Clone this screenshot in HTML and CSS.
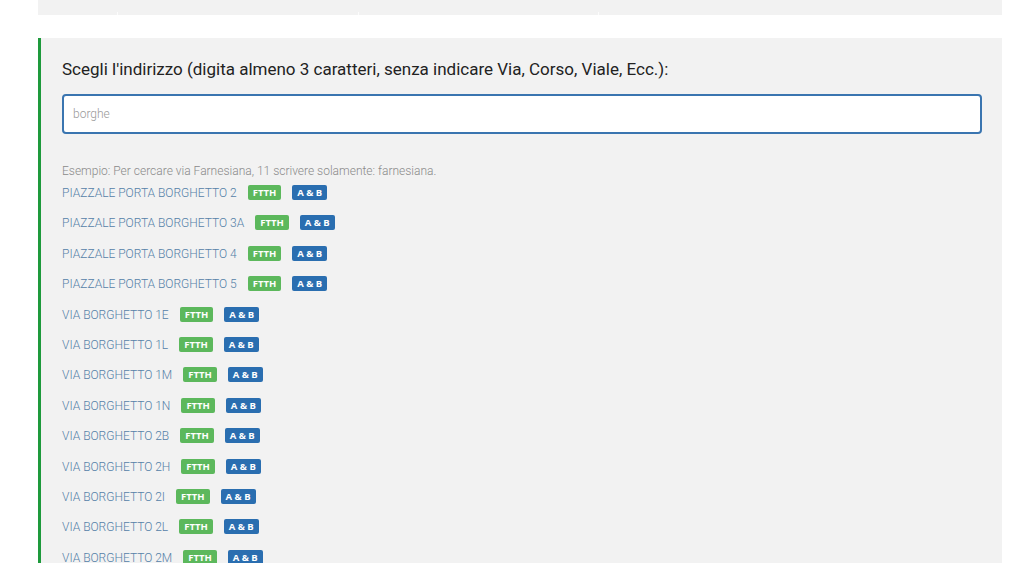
FILE: index.html
```html
<!DOCTYPE html>
<html lang="it">
<head>
    <meta charset="UTF-8">
    <meta name="viewport" content="width=device-width, initial-scale=1.0">
    <title>Verifica copertura</title>
    <link rel="stylesheet" href="styles.css">
</head>
<body>
    <div class="page">
        <div class="top-strip">
            <div class="col"></div>
            <div class="col"></div>
            <div class="col"></div>
            <div class="col"></div>
        </div>

        <div class="panel">
            <h3>Scegli l'indirizzo (digita almeno 3 caratteri, senza indicare Via, Corso, Viale, Ecc.):</h3>
            <input type="text" class="address-input" value="borghe">
            <p class="hint">Esempio: Per cercare via Farnesiana, 11 scrivere solamente: farnesiana.</p>

            <ul class="results">
                <li><a href="#">PIAZZALE PORTA BORGHETTO 2</a> <span class="label label-green">FTTH</span> <span class="label label-blue">A &amp; B</span></li>
                <li><a href="#">PIAZZALE PORTA BORGHETTO 3A</a> <span class="label label-green">FTTH</span> <span class="label label-blue">A &amp; B</span></li>
                <li><a href="#">PIAZZALE PORTA BORGHETTO 4</a> <span class="label label-green">FTTH</span> <span class="label label-blue">A &amp; B</span></li>
                <li><a href="#">PIAZZALE PORTA BORGHETTO 5</a> <span class="label label-green">FTTH</span> <span class="label label-blue">A &amp; B</span></li>
                <li><a href="#">VIA BORGHETTO 1E</a> <span class="label label-green">FTTH</span> <span class="label label-blue">A &amp; B</span></li>
                <li><a href="#">VIA BORGHETTO 1L</a> <span class="label label-green">FTTH</span> <span class="label label-blue">A &amp; B</span></li>
                <li><a href="#">VIA BORGHETTO 1M</a> <span class="label label-green">FTTH</span> <span class="label label-blue">A &amp; B</span></li>
                <li><a href="#">VIA BORGHETTO 1N</a> <span class="label label-green">FTTH</span> <span class="label label-blue">A &amp; B</span></li>
                <li><a href="#">VIA BORGHETTO 2B</a> <span class="label label-green">FTTH</span> <span class="label label-blue">A &amp; B</span></li>
                <li><a href="#">VIA BORGHETTO 2H</a> <span class="label label-green">FTTH</span> <span class="label label-blue">A &amp; B</span></li>
                <li><a href="#">VIA BORGHETTO 2I</a> <span class="label label-green">FTTH</span> <span class="label label-blue">A &amp; B</span></li>
                <li><a href="#">VIA BORGHETTO 2L</a> <span class="label label-green">FTTH</span> <span class="label label-blue">A &amp; B</span></li>
                <li><a href="#">VIA BORGHETTO 2M</a> <span class="label label-green">FTTH</span> <span class="label label-blue">A &amp; B</span></li>
            </ul>
        </div>
    </div>
</body>
</html>
```

FILE: styles.css
```css
html, body {
    margin: 0;
    padding: 0;
    height: 100%;
    overflow: hidden;
}
body {
    font-family: Roboto, "Noto Sans", Arial, sans-serif;
    background: #fff;
    color: #222;
}
.page {
    width: 964px;
    margin-left: 38px;
}
.top-strip {
    display: flex;
    gap: 1px;
    height: 15px;
    margin-bottom: 23px;
    background: linear-gradient(#f2f2f2 12px, #fcfcfc 12px);
}
.top-strip .col {
    flex: 1;
    background: #f2f2f2;
}
.top-strip .col:first-child {
    flex: 0 0 79px;
}
.top-strip .col:last-child {
    flex: 0 0 403px;
}
.panel {
    background: #f2f2f2;
    border-left: 3px solid #1e9a3c;
    padding: 20px 20px 40px 21px;
    min-height: 600px;
}
.panel h3 {
    margin: 0 0 14px;
    font-size: 17px;
    font-weight: 400;
    line-height: 22px;
    color: #222;
}
.address-input {
    display: block;
    box-sizing: border-box;
    width: 100%;
    height: 40px;
    padding: 0 9px;
    border: 2px solid #3a75b0;
    border-radius: 4px;
    background: #fff;
    font-family: Roboto, Arial, sans-serif;
    font-size: 12px;
    font-weight: 300;
    color: #999;
    outline: none;
}
.hint {
    margin: 30px 0 0;
    font-size: 12px;
    line-height: 14px;
    color: #8a8a8a;
    font-weight: 300;
}
.results {
    list-style: none;
    margin: 0;
    padding: 0;
}
.results li {
    line-height: 30.4px;
    font-size: 12px;
}
.results a {
    color: #5581a8;
    text-decoration: none;
    font-weight: 300;
    margin-right: 8px;
}
.label {
    display: inline-block;
    padding: 0 5px;
    height: 15px;
    line-height: 15px;
    font-size: 9.5px;
    font-weight: 700;
    color: #fff;
    border-radius: 2px;
    vertical-align: 1px;
    margin-right: 8px;
    font-family: "Open Sans", Arial, sans-serif;
}
.label-green {
    background: #5cb85c;
}
.label-blue {
    background: #2a6eb0;
}
```
